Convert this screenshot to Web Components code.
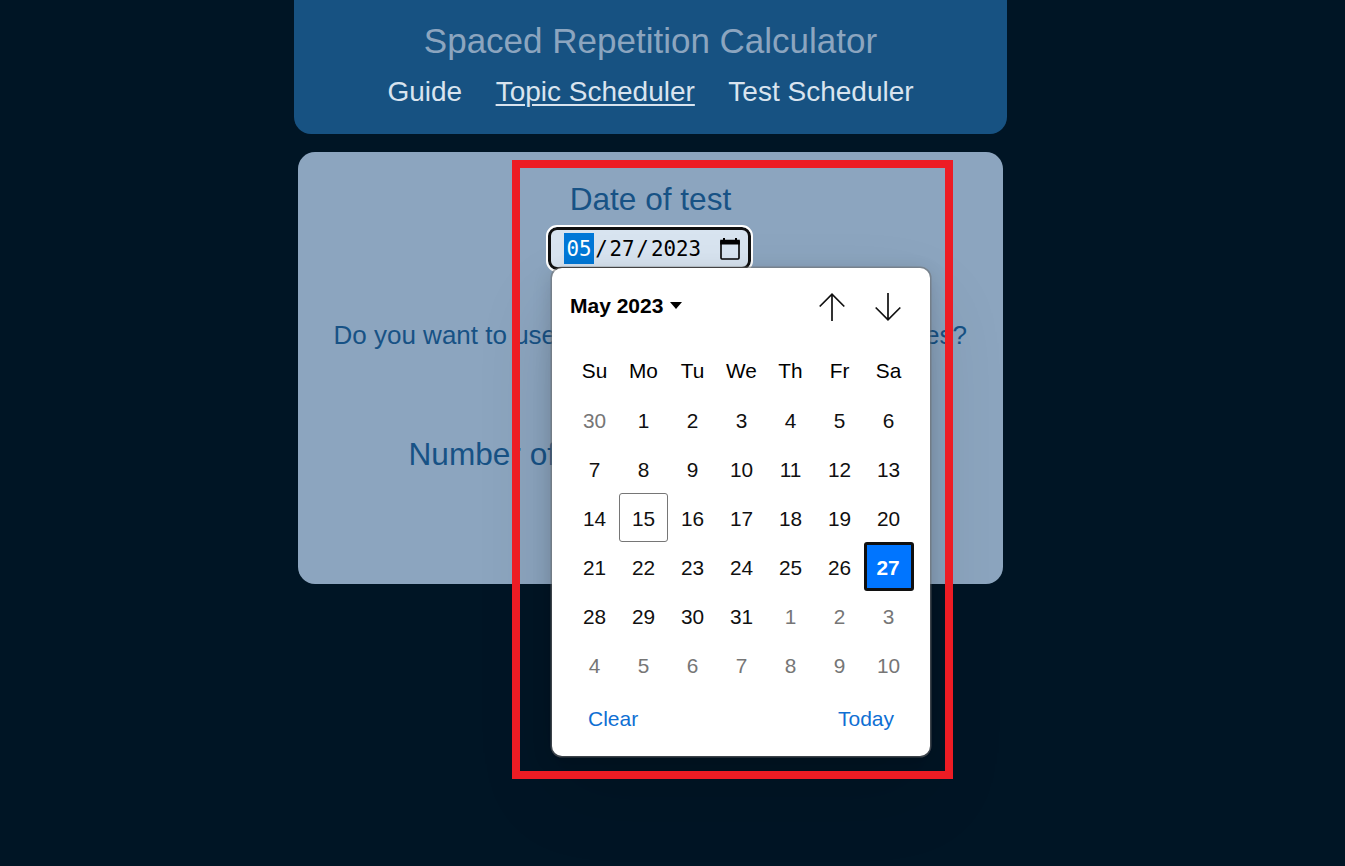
<!DOCTYPE html>
<html lang="en">
<head>
<meta charset="utf-8">
<title>Spaced Repetition Calculator</title>
<style>
html,body{margin:0;height:100%;overflow:hidden;background:#001525}
body{font-family:"Liberation Sans",Arial,sans-serif}
</style>
</head>
<body>
<app-shell></app-shell>
<script>
const define = (name, html, setup) => {
  const t = document.createElement('template');
  t.innerHTML = html;
  customElements.define(name, class extends HTMLElement {
    constructor() {
      super();
      this.attachShadow({mode: 'open'}).append(t.content.cloneNode(true));
      if (setup) setup(this.shadowRoot);
    }
  });
};

define('site-header', `<style>
:host{display:flex;flex-direction:column;align-items:center;box-sizing:border-box;width:713px;height:134px;padding-top:21px;margin-left:294px;background:#175282;border-radius:0 0 17px 17px}
h1{margin:0;font-size:35px;line-height:40px;font-weight:400;color:#8ca5bf}
nav{display:flex;gap:33.5px;margin-top:15px}
</style><h1><slot name="title"></slot></h1><nav><slot></slot></nav>`);

define('nav-link', `<style>
:host{display:block;font-size:28px;line-height:32px;color:#d9e4ef}
:host([current]) span{text-decoration:underline;text-decoration-thickness:2px;text-underline-offset:3px}
</style><span><slot></slot></span>`);

define('date-field', `<style>
:host{display:flex;align-items:center;box-sizing:border-box;width:203px;height:43px;padding:0 8px 0 13px;border:3px solid #101010;border-radius:9px;outline:2px solid #fff;background:#d8e4f0;color:#000;font:20.8px/31px "DejaVu Sans Mono",monospace}
span{height:31px;line-height:33px}
.sel{background:#0078d7;color:#fff;width:30px;text-align:center}
.slash{width:15px;text-align:center}
.y{flex:1;padding-left:1px}
svg{width:20px;height:22px;display:block}
.d{width:26px;text-align:center}
</style><span class="sel">05</span><span class="slash">/</span><span class="d">27</span><span class="slash">/</span><span class="y">2023</span>
<svg viewBox="0 0 20 22"><path d="M1 3.5h18v16.5q0 1-1 1H2q-1 0-1-1z" fill="none" stroke="#000" stroke-width="1.6"/><path d="M.2 1.7h19.6v4.8H.2zM3 0h2v3H3zM15 0h2v3h-2z"/></svg>`);

define('month-grid', `<style>
:host{display:grid;grid-template-columns:repeat(7,49px);grid-template-rows:50px repeat(6,49px);font-size:20.8px}
span{display:flex;align-items:center;justify-content:center;color:#101010;box-sizing:border-box;padding-top:3px}
.h{color:#000;padding-top:2px}
.out{color:#767676}
.today{border:1px solid #767676;border-radius:3px}
.picked{background:#0075ff;color:#fff;font-weight:700;border:3px solid #101010;border-radius:3px;width:50px;padding-right:2px}
</style>`, root => {
  const add = (text, cls) => {
    const s = document.createElement('span');
    s.textContent = text;
    s.className = cls;
    root.append(s);
  };
  ['Su','Mo','Tu','We','Th','Fr','Sa'].forEach(d => add(d, 'h'));
  for (let i = 0; i < 42; i++) {
    const day = i === 0 ? 30 : i > 31 ? i - 31 : i;
    add(day, i === 0 || i > 31 ? 'out' : i === 15 ? 'today' : i === 27 ? 'picked' : '');
  }
});

define('date-popup', `<style>
:host{display:flex;flex-direction:column;box-sizing:border-box;width:378.5px;height:488px;padding:18px 17px 0 17.5px;background:#fff;border-radius:10px;box-shadow:0 0 0 1.5px rgba(110,110,110,.55),0 5px 20px rgba(0,0,0,.16),0 36px 80px rgba(0,0,0,.12);font-size:21px}
header{display:flex;align-items:center;height:40px}
b{color:#000;padding-left:1px}
.tri{width:12px;height:7px;margin-left:7px}
.arr{width:26px;height:28px;margin-top:2px}
.up{margin-left:auto}
.down{margin:2px 12px 0 30px}
.arr path{fill:none;stroke:#101010;stroke-width:1.7}
month-grid{margin:19px 0 0 1px}
footer{display:flex;justify-content:space-between;color:#0f6fd3;padding:18px 19px 0;line-height:24px}
</style>
<header><b>May 2023</b><svg class="tri" viewBox="0 0 12 7"><path d="M0 0h12L6 7z"/></svg>
<svg class="arr up" viewBox="0 0 26 28"><path d="M13 28V1M.7 13.5 13 1.2l12.3 12.3"/></svg>
<svg class="arr down" viewBox="0 0 26 28"><path d="M13 0v27M.7 14.5 13 26.8l12.3-12.3"/></svg></header>
<month-grid></month-grid>
<footer><span>Clear</span><span>Today</span></footer>`);

define('test-card', `<style>
:host{display:flex;flex-direction:column;align-items:center;box-sizing:border-box;width:705px;height:432px;margin:18px 0 0 298px;padding-top:28px;background:#8ca5bf;border-radius:17px;color:#175285}
label{font-size:31.6px;line-height:38px}
date-field{margin:9px 2px 0 0}
.row{display:flex;justify-content:space-between;box-sizing:border-box;width:100%}
.q{font-size:26px;line-height:30px;padding:0 36px 0 35.5px;margin-top:50px}
.n{font-size:31.6px;line-height:38px;padding-left:110.5px;margin-top:85px}
</style><label>Date of test</label><date-field></date-field>
<div class="row q"><span>Do you want to use</span><span>dates?</span></div>
<div class="row n"><span>Number of</span></div>`);

define('app-shell', `<style>
:host{display:block;position:relative;width:1345px;height:866px;overflow:hidden;background:#001525}
date-popup{position:absolute;left:551.5px;top:267.5px}
.mark{position:absolute;left:512px;top:160px;width:441px;height:619px;box-sizing:border-box;border:8px solid #ed1c24}
</style>
<site-header><span slot="title">Spaced Repetition Calculator</span><nav-link>Guide</nav-link><nav-link current>Topic Scheduler</nav-link><nav-link>Test Scheduler</nav-link></site-header>
<test-card></test-card>
<date-popup></date-popup>
<div class="mark"></div>`);
</script>
</body>
</html>
